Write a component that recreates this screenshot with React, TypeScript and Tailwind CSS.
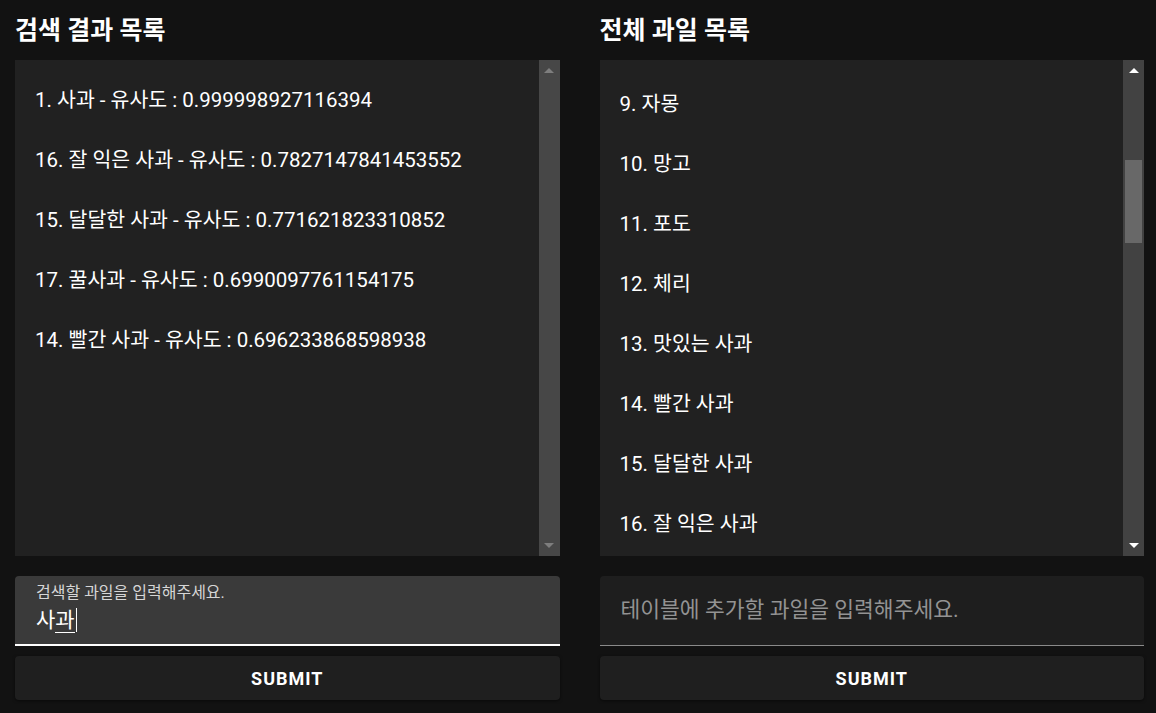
import React from 'react';

const searchResults = [
  { id: 1, name: '사과', score: '0.999998927116394' },
  { id: 16, name: '잘 익은 사과', score: '0.7827147841453552' },
  { id: 15, name: '달달한 사과', score: '0.771621823310852' },
  { id: 17, name: '꿀사과', score: '0.6990097761154175' },
  { id: 14, name: '빨간 사과', score: '0.696233868598938' },
];

// visible slice of the scrolled list (9 ~ 16)
const visibleFruits = [
  { id: 9, name: '자몽' },
  { id: 10, name: '망고' },
  { id: 11, name: '포도' },
  { id: 12, name: '체리' },
  { id: 13, name: '맛있는 사과' },
  { id: 14, name: '빨간 사과' },
  { id: 15, name: '달달한 사과' },
  { id: 16, name: '잘 익은 사과' },
];

// classic scrollbar drawn by hand (headless chrome hides the real one)
function ScrollBar({ disabled }: { disabled?: boolean }) {
  const arrow = disabled ? 'border-b-[#7e7e7e]' : 'border-b-white';
  const arrowDown = disabled ? 'border-t-[#7e7e7e]' : 'border-t-white';
  return (
    <div className={`flex w-[21px] shrink-0 flex-col ${disabled ? 'bg-[#474747]' : 'bg-[#424242]'}`}>
      <div className="flex h-[21px] items-center justify-center">
        <div className={`h-0 w-0 border-x-[5px] border-b-[5px] border-x-transparent ${arrow}`} />
      </div>
      <div className="relative flex-1">
        {!disabled && <div className="absolute left-[2px] right-[2px] top-[79px] h-[83px] bg-[#686868]" />}
      </div>
      <div className="flex h-[21px] items-center justify-center">
        <div className={`h-0 w-0 border-x-[5px] border-t-[5px] border-x-transparent ${arrowDown}`} />
      </div>
    </div>
  );
}

function Item({ children, width }: { children: React.ReactNode; width: string }) {
  return (
    <div className={`flex h-[32px] shrink-0 items-center whitespace-nowrap rounded pl-[3px] text-[20.5px] text-white ${width}`}>
      {children}
    </div>
  );
}

function SubmitButton() {
  return (
    <button className="mt-[10px] flex h-[44px] w-full items-center justify-center rounded bg-[#1f1f1f] text-[18px] font-bold tracking-[1px] text-white shadow-[0_1px_3px_rgba(0,0,0,0.5)]">
      SUBMIT
    </button>
  );
}

export default function App() {
  return (
    <div className="flex h-[713px] w-full gap-10 bg-[#121212] pl-[15px] pr-[12px] font-['Roboto','Noto_Sans_CJK_KR',sans-serif]">
      {/* search results */}
      <div className="flex min-w-0 flex-1 flex-col">
        <h2 className="mt-[16px] mb-[14px] text-[25px] font-bold leading-[30px] text-white">검색 결과 목록</h2>
        <div className="flex h-[496px] bg-[#212121]">
          <div className="flex flex-1 flex-col gap-[28px] overflow-hidden pt-[24px] pl-[17px]">
            {searchResults.map((r) => (
              <Item key={r.id} width="w-[435px]">
                {r.id}. {r.name} - 유사도 : {r.score}
              </Item>
            ))}
          </div>
          <ScrollBar disabled />
        </div>
        <div className="mt-[20px] flex h-[70px] flex-col rounded-t border-b-2 border-white bg-[#3a3a3a] px-[21px]">
          <span className="mt-[7px] text-[16px] leading-[20px] text-[#d6d6d6]">검색할 과일을 입력해주세요.</span>
          <div className="mt-[4px] flex items-center text-[21px] leading-[26px] text-white">
            <span>사</span>
            <span className="border-b border-white leading-[24px]">과</span>
            <span className="ml-[1px] h-[24px] w-px bg-white" />
          </div>
        </div>
        <SubmitButton />
      </div>

      {/* full fruit list */}
      <div className="flex min-w-0 flex-1 flex-col">
        <h2 className="mt-[16px] mb-[14px] text-[25px] font-bold leading-[30px] text-white">전체 과일 목록</h2>
        <div className="flex h-[496px] bg-[#212121]">
          <div className="flex flex-1 flex-col gap-[28px] overflow-hidden pt-[28px] pl-[17px]">
            {visibleFruits.map((f) => (
              <Item key={f.id} width="w-[453px]">
                {f.id}. {f.name}
              </Item>
            ))}
          </div>
          <ScrollBar />
        </div>
        <div className="mt-[20px] flex h-[70px] items-center rounded-t border-b border-[#8a8a8a] bg-[#1e1e1e] px-[21px]">
          <span className="text-[21.5px] text-[#939393]">테이블에 추가할 과일을 입력해주세요.</span>
        </div>
        <SubmitButton />
      </div>
    </div>
  );
}
